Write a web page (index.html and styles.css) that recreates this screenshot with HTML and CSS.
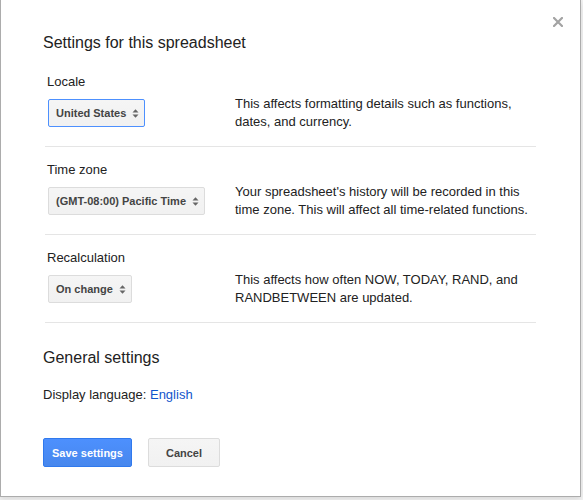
FILE: index.html
```html
<!DOCTYPE html>
<html>
<head>
<meta charset="utf-8">
<link rel="stylesheet" href="styles.css">
</head>
<body>
<div class="dialog">
  <button class="close" aria-label="Close">
    <svg width="10" height="10" viewBox="0 0 10 10"><path d="M1 1L9 9M9 1L1 9" stroke="#a3a3a3" stroke-width="2.2" stroke-linecap="square"/></svg>
  </button>
  <h1 class="title">Settings for this spreadsheet</h1>
  <div class="sections">
    <div class="section">
      <div class="label">Locale</div>
      <div class="row">
        <div class="ctrl">
          <div class="select focused"><span>United States</span><svg class="arrows" width="7" height="9" viewBox="0 0 7 9"><path d="M0.5 3.6L3.5 0.2L6.5 3.6Z M0.5 5.4L3.5 8.8L6.5 5.4Z" fill="#666"/></svg></div>
        </div>
        <p class="desc">This affects formatting details such as functions, dates, and currency.</p>
      </div>
    </div>
    <div class="section">
      <div class="label">Time zone</div>
      <div class="row">
        <div class="ctrl">
          <div class="select"><span>(GMT-08:00) Pacific Time</span><svg class="arrows" width="7" height="9" viewBox="0 0 7 9"><path d="M0.5 3.6L3.5 0.2L6.5 3.6Z M0.5 5.4L3.5 8.8L6.5 5.4Z" fill="#666"/></svg></div>
        </div>
        <p class="desc">Your spreadsheet's history will be recorded in this time zone. This will affect all time-related functions.</p>
      </div>
    </div>
    <div class="section">
      <div class="label">Recalculation</div>
      <div class="row">
        <div class="ctrl">
          <div class="select"><span>On change</span><svg class="arrows" width="7" height="9" viewBox="0 0 7 9"><path d="M0.5 3.6L3.5 0.2L6.5 3.6Z M0.5 5.4L3.5 8.8L6.5 5.4Z" fill="#666"/></svg></div>
        </div>
        <p class="desc">This affects how often NOW, TODAY, RAND, and RANDBETWEEN are updated.</p>
      </div>
    </div>
  </div>
  <h2 class="subtitle">General settings</h2>
  <div class="lang">Display language: <a class="link" href="#">English</a></div>
  <div class="buttons">
    <button class="btn primary">Save settings</button>
    <button class="btn">Cancel</button>
  </div>
</div>
</body>
</html>
```
FILE: styles.css
```css
html, body {
  margin: 0;
  padding: 0;
}
body {
  width: 583px;
  height: 500px;
  overflow: hidden;
  background: #f3f3f3;
  font-family: Arial, "Liberation Sans", sans-serif;
  color: #222;
}
.dialog {
  position: relative;
  box-sizing: border-box;
  width: 581px;
  height: 497px;
  background: #fff;
  border: 1px solid #acacac;
  border-top: none;
  box-shadow: 0 2px 6px rgba(0, 0, 0, 0.12);
  padding: 33px 0 0 42px;
}
.close {
  position: absolute;
  top: 17px;
  right: 17px;
  width: 10px;
  height: 10px;
  padding: 0;
  border: none;
  background: none;
  display: block;
}
.close svg {
  display: block;
}
.title {
  margin: 0;
  font-size: 16px;
  font-weight: normal;
  line-height: 20px;
  color: #222;
}
.sections {
  margin-top: 21px;
  margin-left: 2px;
  width: 491px;
}
.section {
  border-bottom: 1px solid #e5e5e5;
  padding: 15px 0 19px 0;
}
.section:first-child {
  padding-top: 0;
}
.label {
  font-size: 13px;
  line-height: 16px;
  padding-left: 2px;
  margin-bottom: 9px;
  color: #222;
}
.row {
  display: flex;
  align-items: center;
  height: 28px;
}
.ctrl {
  width: 190px;
  flex: none;
  padding-left: 3px;
  box-sizing: border-box;
}
.select {
  display: inline-flex;
  align-items: center;
  box-sizing: border-box;
  height: 28px;
  padding: 0 5px 0 7px;
  gap: 6px;
  border: 1px solid #dcdcdc;
  border-radius: 2px;
  background: linear-gradient(#f5f5f5, #f1f1f1);
  color: #444;
  font-size: 11px;
  font-weight: bold;
}
.select.focused {
  border-color: #4d90fe;
}
.arrows {
  display: block;
  flex: none;
}
.desc {
  margin: 0;
  width: 301px;
  font-size: 13px;
  line-height: 18px;
  color: #222;
}
.subtitle {
  margin: 25px 0 0 0;
  font-size: 16px;
  font-weight: normal;
  line-height: 20px;
  color: #222;
}
.lang {
  margin-top: 19px;
  font-size: 13px;
  line-height: 16px;
  color: #222;
}
.link {
  color: #15c;
  text-decoration: none;
}
.buttons {
  display: flex;
  gap: 16px;
  margin-top: 35px;
}
.btn {
  box-sizing: border-box;
  height: 29px;
  width: 72px;
  padding: 0;
  border: 1px solid #dcdcdc;
  border-radius: 2px;
  background: linear-gradient(#f5f5f5, #f1f1f1);
  color: #444;
  font-family: Arial, "Liberation Sans", sans-serif;
  font-size: 11px;
  font-weight: bold;
  text-align: center;
}
.btn.primary {
  width: 89px;
  border-color: #3079ed;
  background: linear-gradient(#4d90fe, #4787ed);
  color: #fff;
}
```
